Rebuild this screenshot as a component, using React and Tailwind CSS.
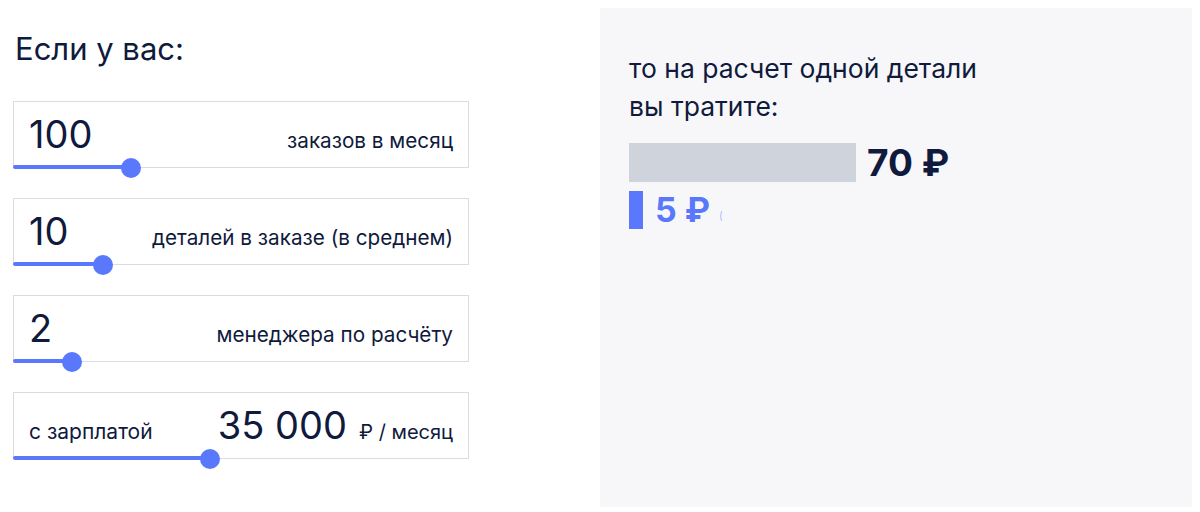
import React from 'react';

const FONT = { fontFamily: 'Inter, "Noto Sans", sans-serif' };

const inputs = [
  { value: '100', label: 'заказов в месяц', thumb: 118 },
  { value: '10', label: 'деталей в заказе (в среднем)', thumb: 90 },
  { value: '2', label: 'менеджера по расчёту', thumb: 59 },
];

function Slider({ thumb }) {
  return (
    <>
      <div
        className="absolute left-[-1px] bottom-[-2px] h-[4px] bg-[#5a78fb] rounded-l-full"
        style={{ width: thumb }}
      />
      <div
        className="absolute bottom-[-11px] w-5 h-5 rounded-full bg-[#5a78fb]"
        style={{ left: thumb - 11 }}
      />
    </>
  );
}

function InputBox({ children, thumb }) {
  return (
    <div className="relative h-[67px] border border-[#d9dce6] bg-white">
      <div className="flex items-baseline justify-between px-[15px] pt-[13px]">{children}</div>
      <Slider thumb={thumb} />
    </div>
  );
}

export default function App() {
  return (
    <div className="flex w-[1200px] h-[512px] bg-white text-[#0f1a3c] pt-2" style={FONT}>
      {/* Inputs */}
      <div className="w-[456px] ml-[13px] mr-[131px]">
        <h2 className="text-[31px] leading-none font-normal pl-[2px] pt-[25px] mb-[37px]">Если у вас:</h2>
        <div className="flex flex-col gap-[30px]">
          {inputs.map((item) => (
            <InputBox key={item.value} thumb={item.thumb}>
              <span className="text-[38px] leading-none">{item.value}</span>
              <span className="text-[20.7px] leading-none">{item.label}</span>
            </InputBox>
          ))}
          <InputBox thumb={197}>
            <span className="text-[21px] leading-none">с зарплатой</span>
            <span className="flex items-baseline gap-[12px]">
              <span className="text-[38px] leading-none">35 000</span>
              <span className="text-[20px] leading-none">₽ / месяц</span>
            </span>
          </InputBox>
        </div>
      </div>

      {/* Result */}
      <div className="w-[592px] h-[499px] bg-[#f7f7fa] pl-[29px] pt-[41px]">
        <p className="text-[26.5px] leading-[38px]">
          то на расчет одной детали
          <br />
          вы тратите:
        </p>
        <div className="flex items-center gap-[11px] mt-[18px]">
          <div className="w-[227px] h-[39px] bg-[#cfd3dc]" />
          <span className="text-[37px] font-bold leading-none">70 ₽</span>
        </div>
        <div className="flex items-center mt-[9px]">
          <div className="w-[14px] h-[38px] bg-[#5a78fb]" />
          <span className="ml-[12px] text-[34px] font-bold leading-none text-[#5a78fb]">5 ₽</span>
          <span className="ml-[9px] mt-[10px] text-[11px] font-light leading-none text-[#9aabfc]">(</span>
        </div>
      </div>
    </div>
  );
}
